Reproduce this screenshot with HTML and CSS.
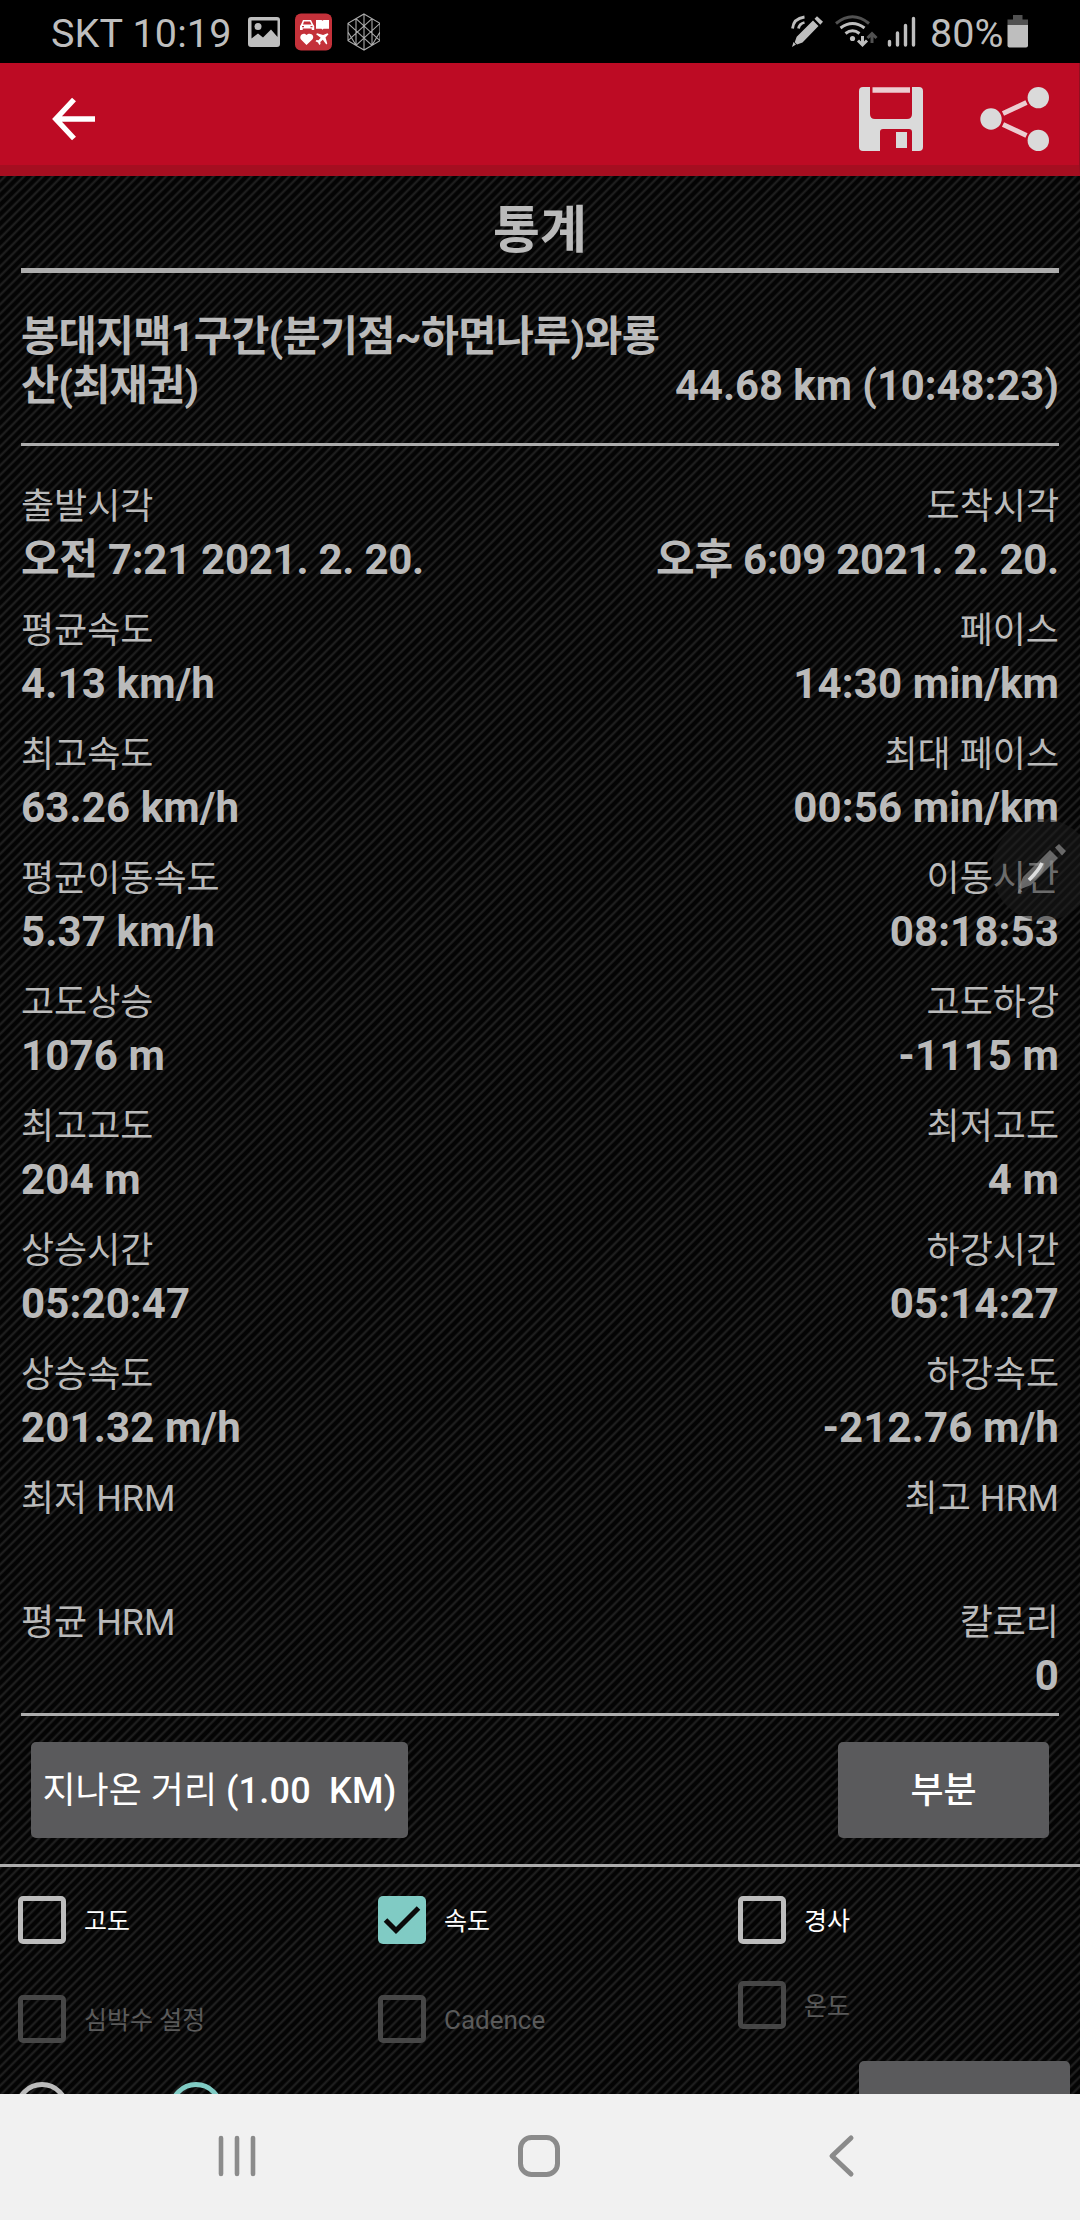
FILE: index.html
```html
<!DOCTYPE html>
<html lang="ko">
<head>
<meta charset="utf-8">
<title>통계</title>
<link rel="stylesheet" href="styles.css">
</head>
<body>
<div class="screen">
  <header class="status">
    <span class="status-text clock">SKT 10:19</span>
    <svg class="status-apps" width="140" height="52" viewBox="240 6 140 52">
      <path fill="#bebebe" fill-rule="evenodd" d="M251 17h26a3 3 0 0 1 3 3v24a3 3 0 0 1-3 3h-26a3 3 0 0 1-3-3V20a3 3 0 0 1 3-3zM251.500 20.500v18l6.500-5 5 4 8-8 6.500 7.500V20.500z"/>
      <circle cx="258" cy="26.500" r="3.500" fill="#bebebe"/>
      <rect x="295" y="13.500" width="37" height="37" rx="6" fill="#c4313a"/>
      <g fill="#fff">
        <path fill-rule="evenodd" d="M303 20h8l2.200 4.500 1 1.500v4h-2.500v-1.500h-9V30H300v-4l1-1.500zM304 21.500l-1 3h8.500l-1.500-3zM302 26v1.300h2V26zM310.500 26v1.300h2V26z"/>
        <path d="M316 20h5.500l1 .8 1-.8h5.500v8.700h-5.500l-1 1-1-1H316z"/>
        <path d="M306.500 45l-5.500-5.500c-2.500-4 2.500-8 5.500-4.500 3.500-3.500 9 .5 5.800 4.500z"/>
        <path d="M327.500 33.200l1 1-3 3.300 1.800 6-1 1-3.500-4.700-2.500 2.300.2 2-1.200 1-1.300-2.700-2.500-1.200 1-1.200 2 .2 2.200-2.500-4.600-3.500 1-1 6 1.800z"/>
      </g>
      <path fill="none" stroke="#aaa" stroke-width="1.100" d="M364 14l16 9.300v17.400L364 50l-16-9.300V23.300zM364 14v36M356 18.700v26.600M372 18.700v26.600M348 23.300l24 22M380 23.300l-24 22M356 18.700l24 22M372 18.700l-24 22M348 32l8 13.300M380 32l-8 13.300"/>
    </svg>
    <svg class="status-net" width="142" height="52" viewBox="786 6 142 52">
      <g fill="none" stroke="#bebebe" stroke-width="2.800">
        <path d="M792.500 28.500q1-10 12-11.500M798.500 28.500q1-5 6-6"/>
      </g>
      <path fill="#bebebe" d="M813 20.500l5.500 5.500-16 16.500-5.500 2-2.300-2.300 2-5.500zM814.500 18.800l2.500-2.500 6 5.500-2.700 2.900zM793.500 42l2.500 2.500-4 2.500z"/>
      <g fill="none" stroke-width="3">
        <path stroke="#515151" d="M836 23.500q16.500-13.500 33 0"/>
        <path stroke="#bebebe" d="M840.500 28q12-9 24 0M845.500 33.500q7-5.500 14 0"/>
        <path stroke="#bebebe" d="M862.500 36v8M858 40.500l4.500 4.500 4.500-4.500"/>
        <path stroke="#515151" d="M872 43v-8.500M867.500 38l4.500-4.500 4.500 4.500"/>
      </g>
      <circle cx="852.500" cy="38.500" r="2.600" fill="#bebebe"/>
      <path stroke="#bebebe" stroke-width="3.400" stroke-linecap="round" d="M889.500 41.500v3.500M897.500 33v12M905.500 25.500v19.500M913.500 18.500v26.500"/>
    </svg>
    <span class="status-text">80%</span>
    <svg class="battery" width="22" height="34" viewBox="0 0 22 34">
      <path fill="#515151" d="M6 0h9.500v4.500H21V10H.5V4.500H6z"/>
      <path fill="#bebebe" d="M.5 10H21v20.500a2 2 0 0 1-2 2H2.500a2 2 0 0 1-2-2z"/>
    </svg>
  </header>

  <nav class="toolbar">
    <svg width="44" height="44" viewBox="0 0 44 44"><path d="M22 2.500L3.800 22 22 41.500M3.500 22H43" fill="none" stroke="#fff" stroke-width="5.400"/></svg>
    <div class="actions">
      <svg width="64" height="64" viewBox="0 0 64 64">
        <path fill="#dadada" d="M4 0h7v27q0 5 5 5h32q5 0 5-5V0h7a4 4 0 0 1 4 4v56a4 4 0 0 1-4 4h-7V45q0-3-3-3H24q-3 0-3 3v19H4a4 4 0 0 1-4-4V4a4 4 0 0 1 4-4z"/>
        <path fill="#eccdd1" d="M13.500 .3H51v5.400H13.500z"/><path fill="#dadada" d="M37 45h11v16H37z"/>
      </svg>
      <svg width="70" height="66" viewBox="0 0 70 66">
        <g fill="#dadada"><circle cx="11" cy="33" r="10.700"/><circle cx="58.300" cy="11.600" r="10.700"/><circle cx="58.300" cy="54.400" r="10.700"/></g>
        <path stroke="#eccdd1" stroke-width="5" d="M23 27.500L46.500 16.500M23 38.500l23.500 11"/>
      </svg>
    </div>
  </nav>

  <main class="content">
    <h1 class="title">통계</h1>
    <section class="track">
      <p class="track-name">봉대지맥1구간(분기점~하면나루)와룡산(최재권)</p>
      <p class="track-total">44.68 km (10:48:23)</p>
    </section>
    <dl class="stats">
      <div class="row"><div class="stat"><dt>출발시각</dt><dd class="date">오전 7:21 2021. 2. 20.</dd></div><div class="stat"><dt>도착시각</dt><dd class="date">오후 6:09 2021. 2. 20.</dd></div></div>
      <div class="row"><div class="stat"><dt>평균속도</dt><dd>4.13 km/h</dd></div><div class="stat"><dt>페이스</dt><dd>14:30 min/km</dd></div></div>
      <div class="row"><div class="stat"><dt>최고속도</dt><dd>63.26 km/h</dd></div><div class="stat"><dt>최대 페이스</dt><dd>00:56 min/km</dd></div></div>
      <div class="row"><div class="stat"><dt>평균이동속도</dt><dd>5.37 km/h</dd></div><div class="stat"><dt>이동시간</dt><dd>08:18:53</dd></div></div>
      <div class="row"><div class="stat"><dt>고도상승</dt><dd>1076 m</dd></div><div class="stat"><dt>고도하강</dt><dd>-1115 m</dd></div></div>
      <div class="row"><div class="stat"><dt>최고고도</dt><dd>204 m</dd></div><div class="stat"><dt>최저고도</dt><dd>4 m</dd></div></div>
      <div class="row"><div class="stat"><dt>상승시간</dt><dd>05:20:47</dd></div><div class="stat"><dt>하강시간</dt><dd>05:14:27</dd></div></div>
      <div class="row"><div class="stat"><dt>상승속도</dt><dd>201.32 m/h</dd></div><div class="stat"><dt>하강속도</dt><dd>-212.76 m/h</dd></div></div>
      <div class="row"><div class="stat"><dt>최저 HRM</dt><dd></dd></div><div class="stat"><dt>최고 HRM</dt><dd></dd></div></div>
      <div class="row"><div class="stat"><dt>평균 HRM</dt><dd></dd></div><div class="stat"><dt>칼로리</dt><dd>0</dd></div></div>
    </dl>
    <div class="buttons">
      <button class="btn btn-distance">지나온 거리 <span class="amount">(1.00&nbsp; KM)</span></button>
      <button class="btn btn-part">부분</button>
    </div>
    <section class="options">
      <div class="column">
        <label class="option"><span class="box"></span><span class="name">고도</span></label>
        <label class="option off"><span class="box"></span><span class="name">심박수 설정</span></label>
      </div>
      <div class="column">
        <label class="option"><span class="box checked"><svg width="48" height="48" viewBox="0 0 48 48"><path d="M7.500 24l10.500 10.500L40.500 12" fill="none" stroke="#0a0a0a" stroke-width="5"/></svg></span><span class="name">속도</span></label>
        <label class="option off"><span class="box"></span><span class="name latin">Cadence</span></label>
      </div>
      <div class="column short">
        <label class="option"><span class="box"></span><span class="name">경사</span></label>
        <label class="option off"><span class="box"></span><span class="name">온도</span></label>
      </div>
    </section>
    <div class="modes">
      <span class="radio"></span>
      <span class="radio selected"></span>
      <span class="btn btn-more"></span>
    </div>
    <svg class="pen" width="102" height="102" viewBox="0 0 102 102">
      <circle cx="51" cy="51" r="51" fill="#1c1c1c" fill-opacity=".5"/>
      <g fill="#8c8c8c" fill-opacity=".7"><path d="M58 31l8 8-27 27-10 4-2-2 4-10z"/><path d="M63 28.500l4-3.500 7 7-4 4.500zM27 69.500l3.500 3-5 2z"/></g>
      <path d="M37 61q10-10 13-17" fill="none" stroke="#ddd" stroke-width="3.500"/>
    </svg>
  </main>

  <footer class="navbar">
    <svg width="40" height="44" viewBox="0 0 40 44"><path d="M4 4v36M20 4v36M36 4v36" stroke="#8b8b8b" stroke-width="4.600" stroke-linecap="round"/></svg>
    <svg class="home" width="44" height="44" viewBox="0 0 44 44"><rect x="3.500" y="3.500" width="37" height="37" rx="11" fill="none" stroke="#8b8b8b" stroke-width="5"/></svg>
    <svg width="28" height="44" viewBox="0 0 28 44"><path d="M24 4L5 22l19 18" fill="none" stroke="#8b8b8b" stroke-width="5" stroke-linecap="round" stroke-linejoin="round"/></svg>
  </footer>
</div>
</body>
</html>
```
FILE: styles.css
```css
* { box-sizing: border-box; }
body { margin: 0; background: #000; font-family: Roboto, "Noto Sans CJK KR", sans-serif; }
svg { display: block; flex: none; }
p, h1, dl, dd { margin: 0; }
.screen { width: 1080px; height: 2220px; display: flex; flex-direction: column; overflow: hidden; }

.status { height: 63px; padding: 6px 51px 5px; display: flex; align-items: center; background: #000; }
.status-text { font-size: 39.5px; line-height: 52px; color: #bebebe; white-space: nowrap; padding-top: 3px; }
.clock { width: 189px; letter-spacing: .15px; }
.status-apps { margin-right: 406px; }
.status-net { margin-right: 2px; }
.battery { margin-left: auto; }

.toolbar { height: 113px; padding: 0 29px 0 52px; display: flex; align-items: center; justify-content: space-between; background: #bd0b24; border-bottom: 11px solid #a50e20; border-right: 1px solid #8f1020; }
.toolbar > svg { margin-top: 10px; }
.actions { display: flex; align-items: center; gap: 57px; padding-top: 10px; }

.content { position: relative; height: 1918px; flex: none; overflow: hidden; color: #bababa;
  background: repeating-linear-gradient(135deg, #040404 0, #040404 1.8px, #202020 3.6px, #202020 4px, #040404 5.8px, #040404 6.7px); }
.title { height: 97px; margin: 0 21px; padding-top: 18px; border-bottom: 5px solid #acacac; text-align: center; font-size: 51px; line-height: 74px; font-weight: 700; }
.track { height: 173px; margin: 0 21px; padding: 39px 0 0; border-bottom: 3px solid #acacac; display: flex; justify-content: space-between; }
.track-name { width: 645px; font-size: 41.5px; line-height: 49px; font-weight: 700; letter-spacing: -.75px; word-break: break-all; }
.track-total { padding-top: 49px; font-size: 41.8px; line-height: 49px; font-weight: 700; white-space: nowrap; }
.stats { height: 1270px; margin: 0 21px; padding-top: 33px; border-bottom: 3px solid #acacac; }
.row { display: flex; justify-content: space-between; height: 124px; }
.stat:last-child { text-align: right; }
dt { font-size: 36px; line-height: 54px; height: 54px; padding-top: 1px; }
dd { font-size: 42px; line-height: 54px; height: 54px; font-weight: 700; letter-spacing: .13px; }
.date { letter-spacing: -.27px; }

.buttons { height: 151px; padding: 26px 31px 0; display: flex; justify-content: space-between; border-bottom: 3px solid #acacac; }
.btn { border: 0; padding: 3px 0 0; height: 96px; border-radius: 5px; background: #5a5a5c; color: #fff; font: 400 36px/93px Roboto, "Noto Sans CJK KR", sans-serif; text-align: center; white-space: nowrap; }
.amount { font-weight: 500; letter-spacing: .2px; }
.btn-distance { width: 377px; }
.btn-part { width: 211px; font-weight: 500; }

.options { height: 194px; padding: 29px 0 0 18px; display: grid; grid-template-columns: repeat(3, 360px); }
.column { display: flex; flex-direction: column; gap: 51px; }
.short { gap: 37px; }
.option { height: 48px; display: flex; align-items: center; gap: 18px; color: #fff; }
.name { font-size: 25px; padding-bottom: 2px; }
.latin { font-size: 26px; padding: 2px 0 0; }
.box { width: 48px; height: 48px; border: 5px solid #bcbcbc; border-radius: 5px; }
.checked { border: 0; background: #80cbc4; }
.off { color: #5a5a5a; }
.off .box { border-color: #464646; }

.modes { display: flex; padding: 21px 10px 0 15px; height: 33px; overflow: hidden; }
.radio { flex: none; width: 54px; height: 54px; margin-right: 100px; border: 5px solid #bcbcbc; border-radius: 50%; }
.selected { border-color: #80cbc4; }
.btn-more { width: 211px; flex: none; margin: -21px 0 0 auto; }
.pen { position: absolute; left: 992px; top: 643px; }

.navbar { flex: none; height: 126px; padding: 0 225px 2px 217px; display: flex; align-items: center; justify-content: space-between; background: #f1f1f1; }
.home { margin-right: 6px; }
```
